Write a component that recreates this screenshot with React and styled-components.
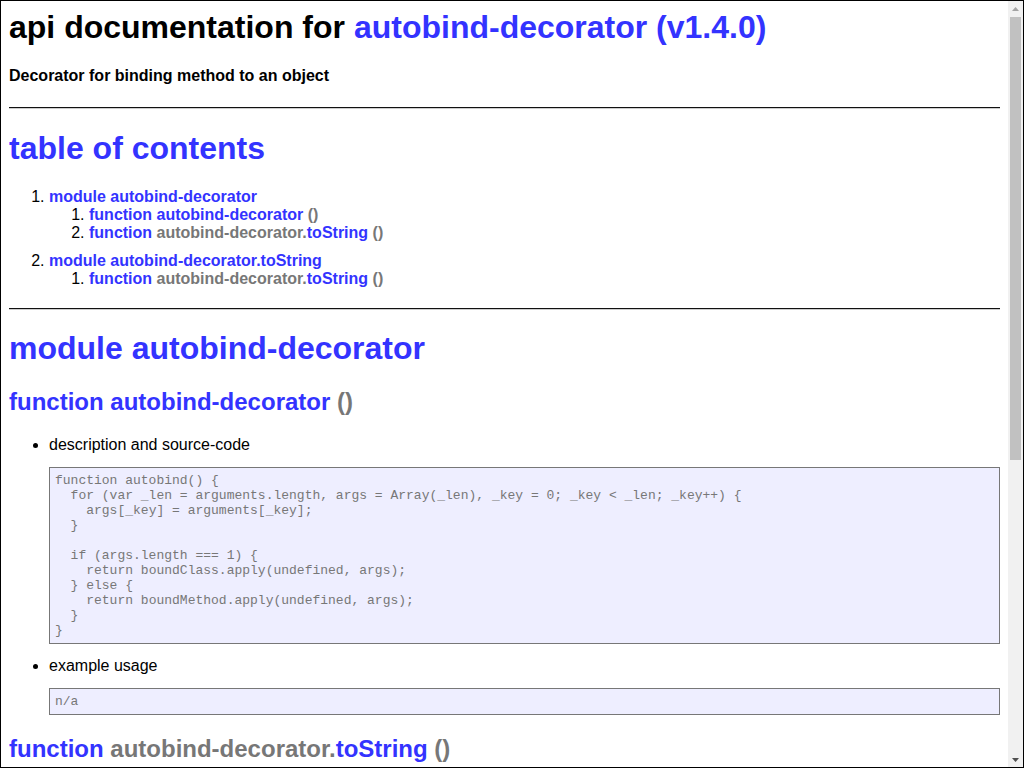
import styled, { createGlobalStyle } from 'styled-components';

const GlobalStyle = createGlobalStyle`
  html, body {
    margin: 0;
    padding: 0;
    overflow: hidden;
    background: #fff;
  }
`;

const sourceMain = `function autobind() {
  for (var _len = arguments.length, args = Array(_len), _key = 0; _key < _len; _key++) {
    args[_key] = arguments[_key];
  }

  if (args.length === 1) {
    return boundClass.apply(undefined, args);
  } else {
    return boundMethod.apply(undefined, args);
  }
}`;

const sourceToString = `function toString() {
  return '[native code]';
}`;

const modules = [
  {
    name: 'autobind-decorator',
    fns: [
      { id: 'a1', prefix: '', name: 'autobind-decorator', source: sourceMain },
      { id: 'a2', prefix: 'autobind-decorator.', name: 'toString', source: sourceToString },
    ],
  },
  {
    name: 'autobind-decorator.toString',
    fns: [
      { id: 'b1', prefix: 'autobind-decorator.', name: 'toString', source: sourceToString },
    ],
  },
];

// function name line, used both in the toc and in the headings
const FnName = ({ fn }) => (
  <>
    <A href='#'>function</A>{' '}
    {fn.prefix && <Sig>{fn.prefix}</Sig>}
    <A href='#'>{fn.name}</A> <Sig>()</Sig>
  </>
);

const App = () => {
  return (
    <>
      <GlobalStyle />
      <Frame>
        <Page>
          <Title>
            api documentation for <A href='#'>autobind-decorator (v1.4.0)</A>
          </Title>
          <Subtitle>Decorator for binding method to an object</Subtitle>

          <Rule />
          <Heading>
            <A href='#'>table of contents</A>
          </Heading>
          <Toc>
            {modules.map((m) => (
              <ModuleItem key={m.name}>
                <A href='#'>module {m.name}</A>
                <SubToc>
                  {m.fns.map((f) => (
                    <li key={f.id}>
                      <FnName fn={f} />
                    </li>
                  ))}
                </SubToc>
              </ModuleItem>
            ))}
          </Toc>

          {modules.map((m) => (
            <div key={m.name}>
              <Rule />
              <Heading>
                <A href='#'>module {m.name}</A>
              </Heading>
              {m.fns.map((f) => (
                <div key={f.id}>
                  <SubHeading>
                    <FnName fn={f} />
                  </SubHeading>
                  <Details>
                    <li>
                      description and source-code
                      <Code>{f.source}</Code>
                    </li>
                    <li>
                      example usage
                      <Code>n/a</Code>
                    </li>
                  </Details>
                </div>
              ))}
            </div>
          ))}

          <Footer>
            [ this document was created with <A href='#'>utility2</A> ]
          </Footer>
        </Page>

        <Scrollbar>
          <ScrollButton $dim>
            <svg width='7' height='4' viewBox='0 0 7 4'>
              <path d='M0 4 L3.5 0 L7 4 Z' fill='currentColor' />
            </svg>
          </ScrollButton>
          <Thumb />
          <ScrollButton>
            <svg width='7' height='4' viewBox='0 0 7 4'>
              <path d='M0 0 L7 0 L3.5 4 Z' fill='currentColor' />
            </svg>
          </ScrollButton>
        </Scrollbar>
      </Frame>
    </>
  );
};

export default App;

const Frame = styled.div`
  box-sizing: border-box;
  width: 1024px;
  height: 768px;
  border: 1px solid #000;
  display: flex;
  overflow: hidden;
`;

const Page = styled.div`
  flex: 1;
  min-width: 0;
  padding: 8px;
  font-family: 'Liberation Sans', Arial, sans-serif;
  font-size: 16px;
  color: #000;
`;

const Scrollbar = styled.div`
  width: 15px;
  flex-shrink: 0;
  background: #f1f1f1;
  display: flex;
  flex-direction: column;
`;

const ScrollButton = styled.div`
  height: 15px;
  flex-shrink: 0;
  display: flex;
  align-items: center;
  justify-content: center;
  color: ${(p) => (p.$dim ? '#a3a3a3' : '#505050')};

  &:last-child {
    margin-top: auto;
  }
`;

const Thumb = styled.div`
  height: 443px;
  margin: 1px 2px 0;
  background: #c1c1c1;
`;

const A = styled.a`
  color: #33f;
  font-weight: bold;
  text-decoration: none;
`;

const Sig = styled.span`
  color: #777;
  font-weight: bold;
`;

const Title = styled.h1`
  font-size: 32px;
  margin: 0 0 21.44px;
`;

const Subtitle = styled.h4`
  font-size: 16px;
  margin: 21.28px 0;
`;

const Rule = styled.hr`
  border: 0;
  border-top: 1px solid #111;
  border-bottom: 1px solid #ccc;
  height: 0;
  margin: 20px 0 0;
`;

const Heading = styled.h1`
  font-size: 32px;
  margin: 20.8px 0 21px;
`;

const SubHeading = styled.h2`
  font-size: 24px;
  margin: 20px 0;
`;

const Toc = styled.ol`
  margin: 16px 0;
  padding-left: 40px;
`;

const ModuleItem = styled.li`
  margin-top: 10px;

  &:first-child {
    margin-top: 0;
  }
`;

const SubToc = styled.ol`
  margin: 0;
  padding-left: 40px;
`;

const Details = styled.ul`
  margin: 16px 0;
  padding-left: 40px;
`;

const Code = styled.pre`
  background: #eef;
  border: 1px solid #777;
  color: #777;
  font-family: 'Liberation Mono', monospace;
  font-size: 13px;
  line-height: 15px;
  margin: 13px 0;
  padding: 5px;
  white-space: pre-wrap;
`;

const Footer = styled.div`
  margin-top: 20px;
  text-align: center;
`;
